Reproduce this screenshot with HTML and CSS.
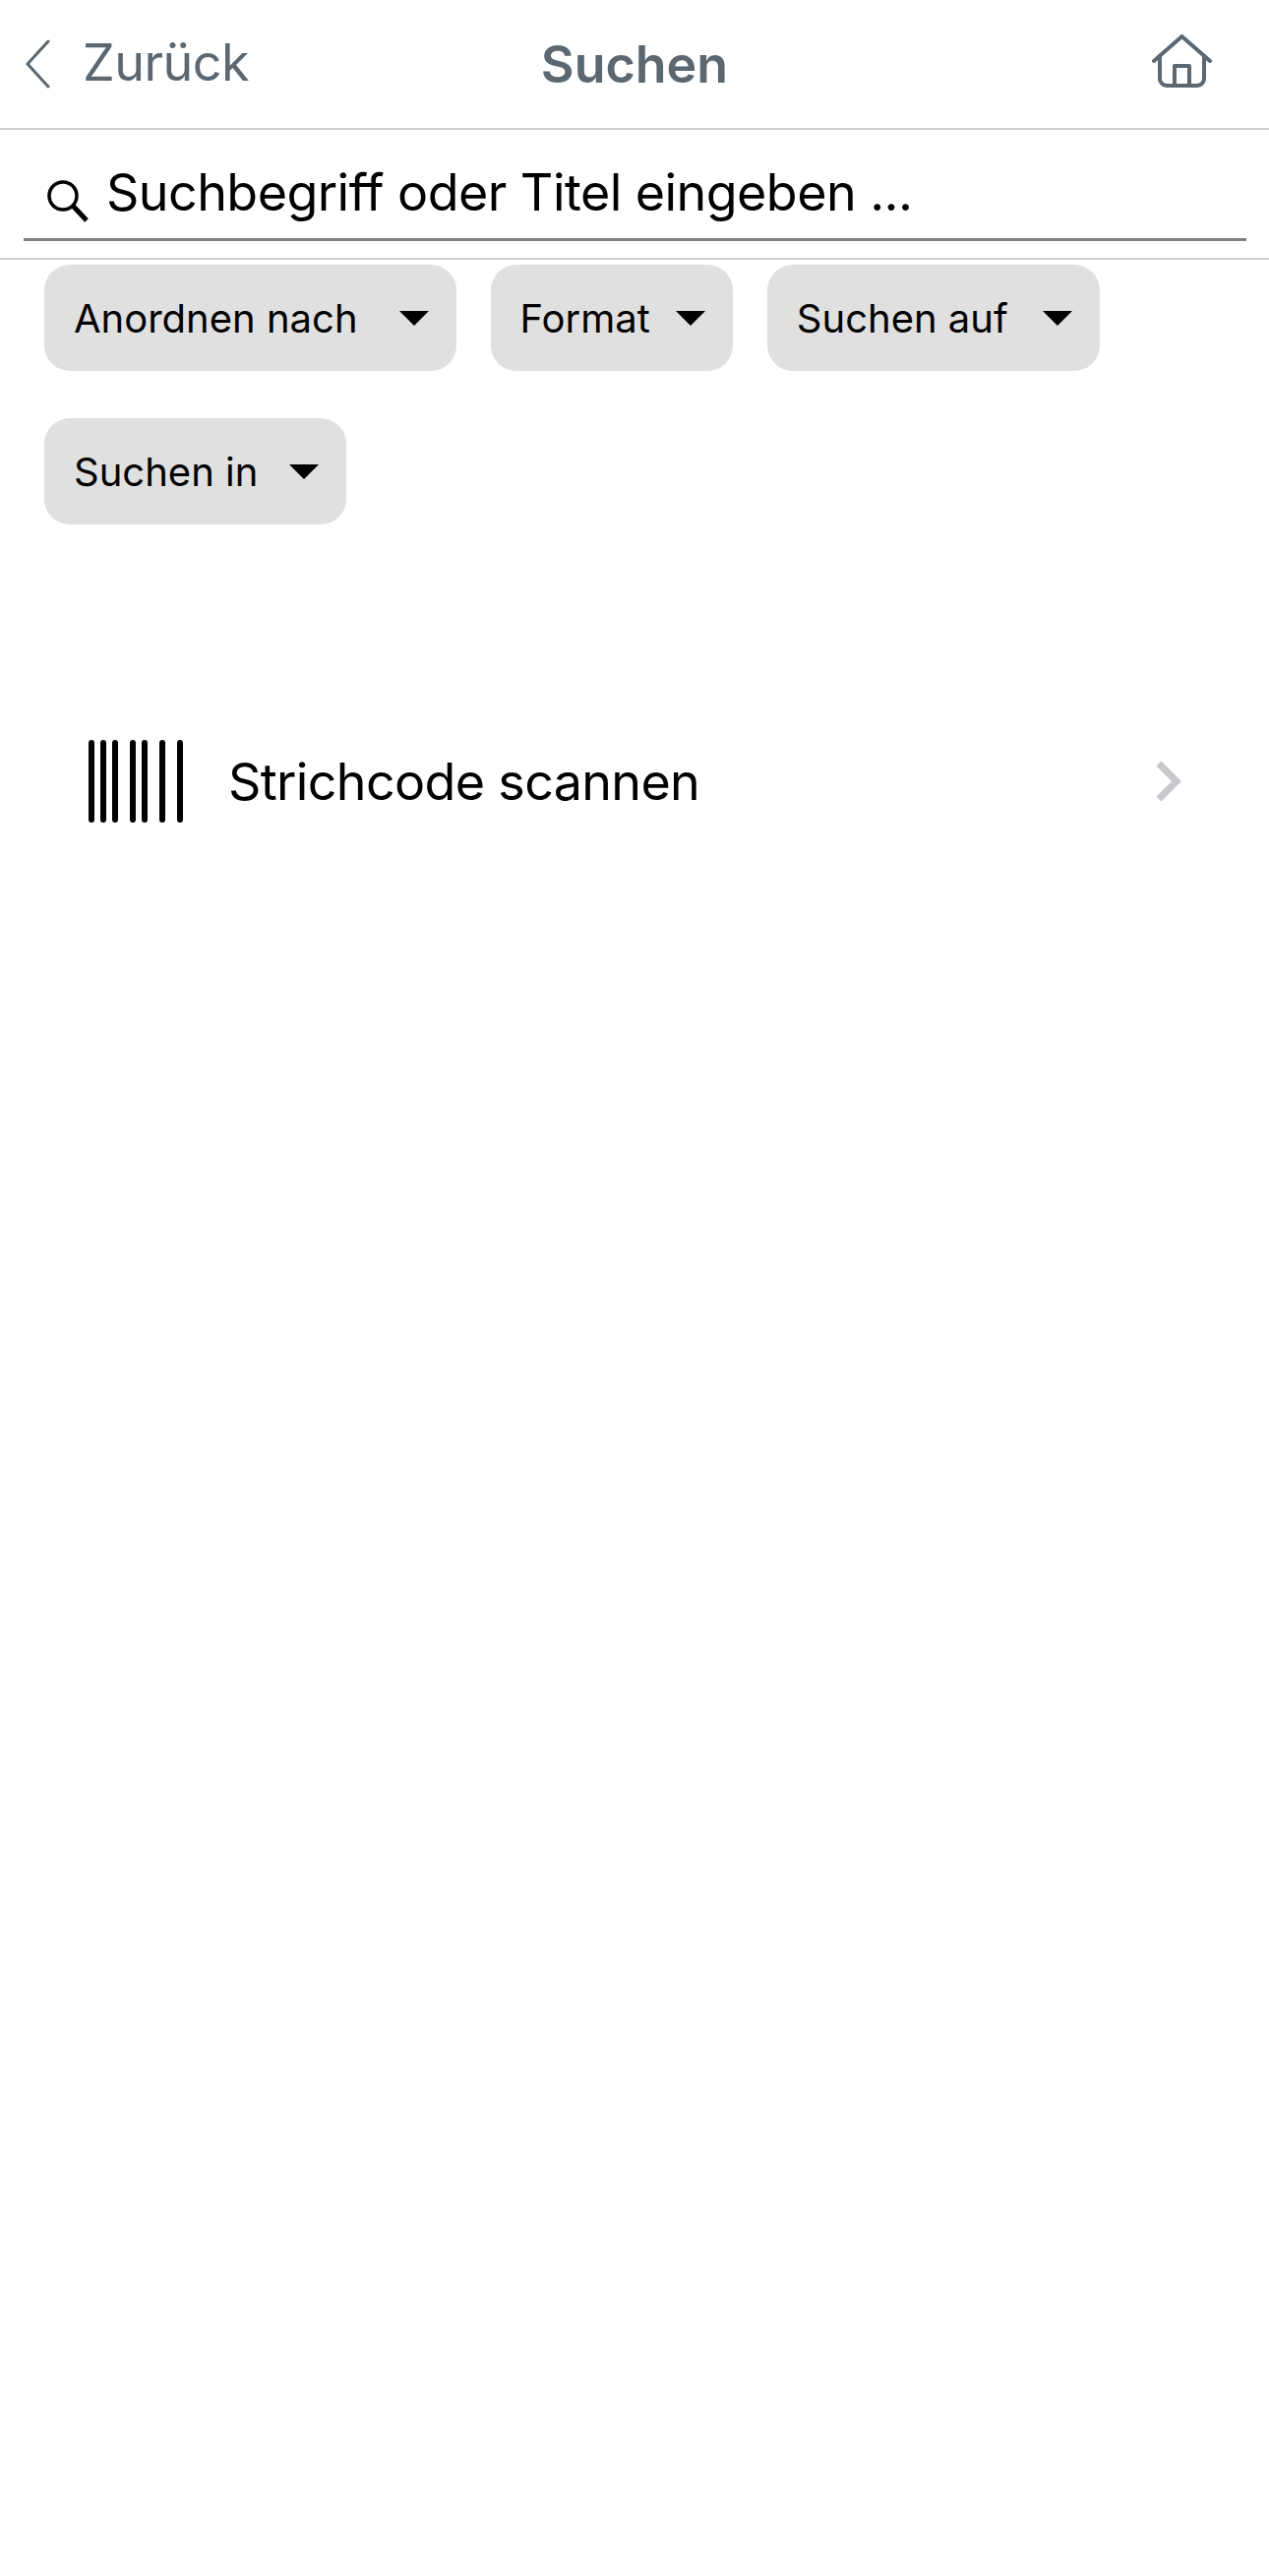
FILE: index.html
```html
<!DOCTYPE html>
<html lang="de">
<head>
<meta charset="utf-8">
<title>Suchen</title>
<link rel="stylesheet" href="styles.css">
</head>
<body>
<header class="topbar">
  <a class="back">
    <svg class="back-icon" width="26" height="50" viewBox="0 0 26 50"><path d="M24 2 3 25l21 23" fill="none" stroke="#5b6771" stroke-width="3" stroke-linecap="round" stroke-linejoin="round"/></svg>
    <span>Zurück</span>
  </a>
  <h1 class="title">Suchen</h1>
  <svg class="home-icon" width="64" height="56" viewBox="0 0 64 56"><g fill="none" stroke="#5b6771" stroke-width="4" stroke-linecap="round" stroke-linejoin="round"><path d="M3 27 31.500 2 60 27"/><path d="M9 22v23a7 7 0 0 0 7 7h31a7 7 0 0 0 7-7V22"/><path d="M24 52V32h15v20"/></g></svg>
</header>
<section class="searchbar">
  <div class="search-field">
    <svg class="search-icon" width="44" height="44" viewBox="0 0 44 44"><g fill="none" stroke="#000" stroke-width="3.500"><circle cx="16" cy="16" r="14"/></g><path d="M26 26 40 41" fill="none" stroke="#000" stroke-width="5"/></svg>
    <span>Suchbegriff oder Titel eingeben ...</span>
  </div>
</section>
<nav class="filters">
  <button class="chip chip-sort">Anordnen nach<i class="caret"></i></button>
  <button class="chip chip-format">Format<i class="caret"></i></button>
  <button class="chip chip-on">Suchen auf<i class="caret"></i></button>
  <button class="chip chip-in">Suchen in<i class="caret"></i></button>
</nav>
<a class="scan">
  <svg class="barcode" width="100" height="84" viewBox="0 0 100 84"><g stroke="#000" stroke-width="6" stroke-linecap="round"><path d="M4 3v78M16 3v78M28 3v78M46 3v78M58 3v78M76 3v78M94 3v78"/></g></svg>
  <span class="scan-label">Strichcode scannen</span>
  <svg class="scan-chevron" width="30" height="44" viewBox="0 0 30 44"><path d="M4 4 22 22 4 40" fill="none" stroke="#c7c7cc" stroke-width="7"/></svg>
</a>
</body>
</html>
```
FILE: styles.css
```css
* { box-sizing: border-box; }
html, body { margin: 0; padding: 0; background: #fff; }
body { font-family: Inter, "Liberation Sans", sans-serif; color: #000; height: 2618px; overflow: hidden; }

.topbar {
  position: relative;
  display: flex;
  align-items: center;
  justify-content: space-between;
  height: 132px;
  padding: 0 56px 0 25px;
  border-bottom: 2px solid #cfcfcf;
}
.back { display: flex; align-items: center; gap: 33px; margin-top: -4px; font-size: 52px; letter-spacing: -0.5px; color: #5b6771; }
.back-icon { display: block; margin-top: 4px; }
.title {
  position: absolute;
  left: 0; right: 0; top: 34px;
  margin: 0;
  text-align: center;
  font-size: 52px;
  line-height: 64px;
  font-weight: 600;
  color: #5b6771;
}
.home-icon { display: block; margin-top: -4px; }

.searchbar { height: 132px; padding: 0 23px 0 24px; border-bottom: 2px solid #cfcfcf; }
.search-field {
  display: flex;
  align-items: center;
  gap: 16px;
  height: 113px;
  padding: 17px 0 0 24px;
  border-bottom: 3px solid #808080;
  font-size: 52px;
  letter-spacing: -0.55px;
  white-space: nowrap;
}
.search-icon { display: block; margin-top: 19px; }

.filters { display: flex; flex-wrap: wrap; gap: 48px 35px; padding: 5px 45px 0; }
.chip {
  display: flex;
  align-items: center;
  justify-content: space-between;
  height: 108px;
  padding: 0 28px 0 30px;
  border: 0;
  border-radius: 26px;
  background: #e0e0e0;
  font: inherit;
  font-size: 40px;
  color: #000;
}
.chip-sort { gap: 42px; }
.chip-format { gap: 26px; }
.chip-on { gap: 35px; }
.chip-in { gap: 32px; }
.caret { display: block; width: 0; height: 0; border-style: solid; border-width: 15px 15px 0; border-color: #000 transparent transparent; }

.scan { display: flex; align-items: center; margin-top: 219px; padding: 0 86px 0 89px; }
.barcode { display: block; flex: none; }
.scan-label { flex: 1; margin-left: 43px; font-size: 52px; letter-spacing: -0.65px; }
.scan-chevron { display: block; }
```
